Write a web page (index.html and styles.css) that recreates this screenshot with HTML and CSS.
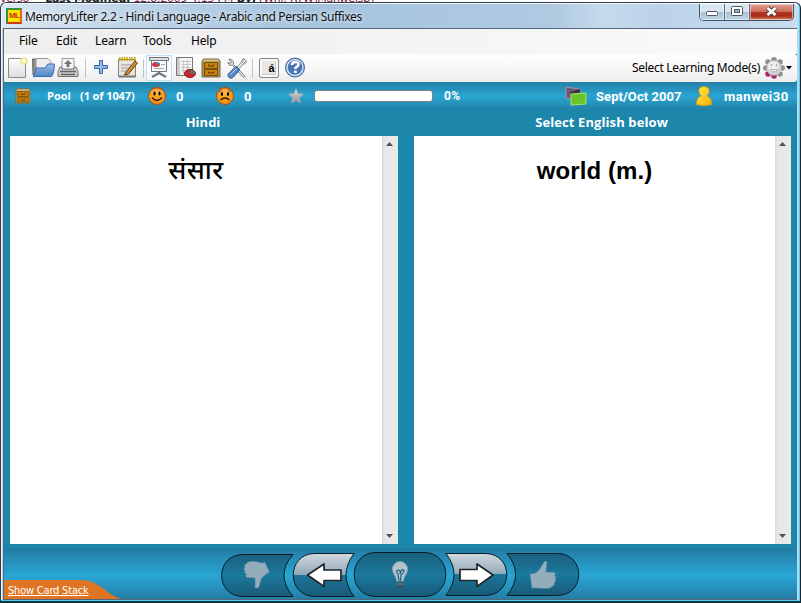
FILE: index.html
```html
<!DOCTYPE html>
<html lang="en">
<head>
<meta charset="utf-8">
<title>MemoryLifter 2.2</title>
<link rel="stylesheet" href="styles.css">
</head>
<body>
<svg width="0" height="0" class="defs" aria-hidden="true">
  <defs>
    <linearGradient id="paper" x2="0" y2="1"><stop stop-color="#fff"/><stop offset="1" stop-color="#ddd"/></linearGradient>
    <linearGradient id="face" x2="0" y2="1"><stop stop-color="#e8750c"/><stop offset=".5" stop-color="#ffa51e"/><stop offset="1" stop-color="#f08a12"/></linearGradient>
    <linearGradient id="dark" x2="0" y2="1"><stop stop-color="#1a5f7e"/><stop offset=".5" stop-color="#1b7a9d"/><stop offset="1" stop-color="#195a78"/></linearGradient>
    <linearGradient id="lit" x2="0" y2="1"><stop stop-color="#d3d8dd"/><stop offset=".49" stop-color="#91a9ba"/><stop offset=".5" stop-color="#1c7599"/><stop offset="1" stop-color="#195a78"/></linearGradient>
    <linearGradient id="blue" x2="0" y2="1"><stop stop-color="#9dbfe8"/><stop offset="1" stop-color="#4f84c6"/></linearGradient>
    <linearGradient id="grey" x2="0" y2="1"><stop stop-color="#d6d6d6"/><stop offset="1" stop-color="#999"/></linearGradient>
    <linearGradient id="gold" x2="1" y2="1"><stop stop-color="#fff04a"/><stop offset="1" stop-color="#ffab08"/></linearGradient>
    <symbol id="drawer" viewBox="0 0 20 20">
      <path d="M2.500 1h15l1.500 2.500V19H1V3.500z" fill="#a98f50" stroke="#7a6942"/>
      <path d="M3 1.500h14l1 2H2z" fill="#d4bb80"/>
      <path d="M3.500 4.500h13v6h-13zM3.500 11.500h13v6h-13z" fill="#cf8004" stroke="#6d5013"/>
      <path d="M7.500 6.500v1.500h5v-1.500M7.500 13.500v1.500h5v-1.500" fill="none" stroke="#4e3812"/>
    </symbol>
  </defs>
</svg>
<div class="behind"><span>verso&nbsp; &nbsp; &nbsp;</span><b>Last Modified:</b><span> 12.8.2009 4:15 PM</span><b> By:</b><span> [Wnl: RTW\Manweisb]</span></div>
<main class="window">
  <header class="titlebar">
    <span class="logo">ML</span>
    <h1>MemoryLifter 2.2 - Hindi Language - Arabic and Persian Suffixes</h1>
    <div class="caption">
      <span class="cap min"><svg width="12" height="5"><rect x=".5" y=".5" width="11" height="4" rx="1" fill="#fff" stroke="#4c5668"/></svg></span>
      <span class="cap max"><svg width="12" height="10"><rect x=".5" y=".5" width="11" height="9" rx="1" fill="#fff" stroke="#4c5668"/><rect x="3.500" y="3.500" width="5" height="3" fill="#9eb5cc" stroke="#4c5668"/></svg></span>
      <span class="cap close"><svg width="13" height="11"><path d="M2.500 2l8 7M10.500 2l-8 7" stroke="#553c42" stroke-width="4.600"/><path d="M2.500 2l8 7M10.500 2l-8 7" stroke="#fff" stroke-width="2.700"/></svg></span>
    </div>
  </header>
  <section class="client">
    <nav class="menu"><span class="m1">File</span><span class="m2">Edit</span><span class="m3">Learn</span><span class="m4">Tools</span><span class="m5">Help</span></nav>
    <div class="toolbar">
      <svg class="ic" viewBox="0 0 24 24"><path d="M3.500 2.500h17v19h-17z" fill="url(#paper)" stroke="#888c8c"/><circle cx="19" cy="5" r="3" fill="#fffde0" stroke="#eee07a" stroke-width="1.500"/></svg>
      <svg class="ic open" viewBox="0 0 24 24"><path d="M2 19L1.500 3h5l1.500 2h11v14z" fill="#929292" stroke="#666"/><path d="M5 2.500h12l3 3V13H5z" fill="#eee" stroke="#999"/><path d="M2 20.500q2-1 3-8.500h9l3-4h6.500q-.5 10-3 12.500z" fill="url(#blue)" stroke="#356baf"/></svg>
      <svg class="ic print" viewBox="0 0 24 24"><path d="M6 13V2.500h12V13" fill="#f7f7f7" stroke="#999"/><path d="M12 4l4 4h-2.500v3h-3V8H8z" fill="#777"/><path d="M4 11h2v2h12v-2h2l2 4v5.500H2V15z" fill="#ccc" stroke="#777"/><path d="M4 15.500h16M5 18.500h14" stroke="#666" stroke-width="1.500"/></svg>
      <i class="sep s1"></i>
      <svg class="ic plus" viewBox="0 0 24 24"><path d="M10.500 4.500h3v5h5v3h-5v5h-3v-5h-5v-3h5z" fill="#91bce7" stroke="#3465a4"/></svg>
      <svg class="ic note" viewBox="0 0 24 24"><path d="M3.500 3.500h17v17h-17z" fill="#e8e6de" stroke="#84827c"/><path d="M4 20.500h16.500" stroke="#777" stroke-width="2"/><path d="M6 9h10M6 12h8M6 15h6" stroke="#999"/><path d="M4 3h17" stroke="#c9a80b" stroke-width="4" stroke-dasharray="1.500 1"/><path d="M11 16L20 5l2.500 2-9 11-4 1z" fill="#ce8f32" stroke="#5b3d18"/></svg>
      <i class="sep s2"></i>
      <span class="selected"><svg class="ic" viewBox="0 0 24 24"><path d="M4.500 4.500h15v11h-15z" fill="#fafafa" stroke="#777"/><path d="M2.500 1.500h19v3h-19z" fill="#ddd" stroke="#777"/><ellipse cx="9" cy="8.500" rx="4" ry="2.500" fill="#d53035"/><path d="M9 8.500V6a4 2.500 0 0 1 4 2.500z" fill="#478dc8"/><path d="M7 12.500h10M14 8.500h4" stroke="#aaa"/><path d="M12 15v3M12 17l-7 4M12 17l7 4" stroke="#777" stroke-width="2.200"/></svg></span>
      <svg class="ic stats" viewBox="0 0 24 24"><path d="M3.500 1.500h16v18h-16z" fill="#f6f6f6" stroke="#777"/><path d="M4 2h3v17H4z" fill="#ccc"/><path d="M8 5.500h10M8 8.500h10M8 11.500h10M8 14.500h10M10.500 4v14M14.500 4v14" stroke="#c4c4c4"/><ellipse cx="17" cy="17.500" rx="5.500" ry="4" fill="#c6262b" stroke="#8e171b"/><path d="M17 17.500v-3.500a5 3 0 0 1 5 3.500z" fill="#467b76"/></svg>
      <svg class="ic box"><use href="#drawer"/></svg>
      <svg class="ic tools" viewBox="0 0 24 24"><path d="M3 3l2-1 3 3v3l11 11c3 3 1 4-1 2L7 9H4L2 6l3 1 1-2z" fill="#eee" stroke="#6a6f72"/><path d="M20 2l2 2-8 9-2-2z" fill="#eee" stroke="#777"/><path d="M19 1l-2 4 3 3 3-3" fill="none" stroke="#888"/><path d="M11 10l4 4-7 8c-3 3-8-1-5-4z" fill="#578bc7" stroke="#23548e"/><path d="M5 19l6-6" stroke="#c1daf6"/></svg>
      <i class="sep s3"></i>
      <span class="key">á</span>
      <svg class="ic help" viewBox="0 0 24 24"><circle cx="12" cy="11.500" r="9.500" fill="#4773b3" stroke="#456998"/><circle cx="12" cy="11.500" r="8" fill="#4976b7" stroke="#d5e2f3" stroke-width="1.500"/><path d="M9 9c0-4 6.500-4 6.500-.5 0 2.200-3.200 2-3.200 4.500" fill="none" stroke="#fff" stroke-width="2.500"/><path d="M11 14.500h2.700V17H11z" fill="#fff"/></svg>
      <span class="mode">Select Learning Mode(s)</span>
      <svg class="gear" viewBox="0 0 22 22"><g fill="#8f9194"><circle cx="11" cy="2.800" r="2.800"/><circle cx="17" cy="5" r="2.800"/><circle cx="19.200" cy="11" r="2.800"/><circle cx="5" cy="5" r="2.800"/></g><g fill="#a8296a"><circle cx="5" cy="17" r="2.800"/><circle cx="11" cy="19" r="2.800"/></g><circle cx="2.800" cy="11" r="2.800" fill="#9b8d96"/><circle cx="17" cy="17" r="2.800" fill="#8f9194"/><circle cx="11" cy="11" r="7.500" fill="#cfcfd1"/><circle cx="10.500" cy="9.500" r="5.500" fill="#eee"/><path d="M8.500 7v2.500M13.500 7v2.500" stroke="#aaa" stroke-width="1.200"/><path d="M7 12.500q4 4.500 8 0z" fill="#fff" stroke="#999" stroke-width=".7"/></svg>
      <svg class="drop" width="6" height="4"><path d="M0 0h6L3 3.500z"/></svg>
    </div>
    <div class="status">
      <svg class="pool-ic"><use href="#drawer"/></svg>
      <span class="pool">Pool</span><span class="count">(1 of 1047)</span>
      <svg class="smile" viewBox="0 0 18 18"><circle cx="9" cy="9" r="8.500" fill="url(#face)" stroke="#a84b0a"/><ellipse cx="9" cy="5" rx="6" ry="3" fill="#ffd37a" opacity=".5"/><ellipse cx="6.500" cy="6.500" rx="1.100" ry="2.100"/><ellipse cx="11.500" cy="6.500" rx="1.100" ry="2.100"/><path d="M4 10.500q5 6 10 0" fill="none" stroke="#26180a" stroke-width="1.300"/></svg>
      <span class="good">0</span>
      <svg class="smile sad" viewBox="0 0 18 18"><circle cx="9" cy="9" r="8.500" fill="url(#face)" stroke="#a84b0a"/><ellipse cx="9" cy="5" rx="6" ry="3" fill="#ffd37a" opacity=".5"/><ellipse cx="6" cy="7" rx="1.100" ry="1.900"/><ellipse cx="12" cy="7" rx="1.100" ry="1.900"/><path d="M4.500 13q4.500-4 9 0" fill="none" stroke="#26180a" stroke-width="1.300"/><path d="M3 5l3-2M12 3l3 2" stroke="#6d3a0a" stroke-width=".8"/></svg>
      <span class="bad">0</span>
      <svg class="star" viewBox="0 0 16 16"><path d="M8 .5l2.300 5 5.200.6-3.800 3.600 1 5.300L8 12.500 3.300 15l1-5.300L.5 6.100l5.200-.6z" fill="url(#grey)" stroke="#9aa5aa" stroke-width=".5"/></svg>
      <span class="progress"></span><span class="percent">0%</span>
      <svg class="stack" viewBox="0 0 22 20"><path d="M1 1l14 2v11L1 12z" fill="#6e5877" stroke="#a991b1"/><path d="M5 6l10-3v6l-7 1v3z" fill="#3d3245"/><path d="M6 8l15-1v11L6 19z" fill="#6ac52b" stroke="#a3e566"/></svg>
      <span class="date">Sept/Oct 2007</span>
      <svg class="user" viewBox="0 0 16 20"><path d="M8 .8c7 0 5.500 7 2.500 9.200C14 11 15.500 14 15.300 18.500Q8 20.500.7 18.500C.5 14 2 11 5.500 10 2.500 7.500 1 .8 8 .8z" fill="url(#gold)" stroke="#f3a800"/></svg>
      <span class="name">manwei30</span>
    </div>
    <div class="cards">
      <section class="card left"><h2>Hindi</h2><div class="sheet"><p class="word hindi">संसार</p><div class="scroll"><svg width="7" height="4"><path d="M0 4h7L3.500 0z" fill="#505050"/></svg><svg width="7" height="4"><path d="M0 0h7L3.500 4z" fill="#505050"/></svg></div></div></section>
      <section class="card right"><h2>Select English below</h2><div class="sheet"><p class="word english">world (m.)</p><div class="scroll"><svg width="7" height="4"><path d="M0 4h7L3.500 0z" fill="#505050"/></svg><svg width="7" height="4"><path d="M0 0h7L3.500 4z" fill="#505050"/></svg></div></div></section>
    </div>
    <footer class="controls">
      <svg width="72" height="46"><path d="M22 2.500h50Q54 23 72 44.500H22C-6.500 44.500-6.500 2.500 22 2.500z" fill="url(#dark)" stroke="#061d29"/><path d="M27 10q5-1.500 10 0l5 1 1.500-1.200 5 10-5 3.700q-3 2-4 5.500-.5 4-2 7h-3.500V26l-8-.5q-2.500-1-.5-3.200-3-1.300-1.500-3.500-2.200-1.500-.2-3.300Q22 13 25 12z" fill="#93adbd" stroke="#527f98" stroke-width=".6"/></svg>
      <svg width="61" height="46"><path d="M22 1.500h39Q45 23 61 44.500H22C-7 44.500-7 1.500 22 1.500z" fill="url(#lit)" stroke="#061d29"/><path d="M14.500 23L31 12v6h17v10.500H31v6z" fill="#fff" stroke="#202528" stroke-width="1.700" stroke-linejoin="round"/></svg>
      <svg width="92" height="46"><path d="M22 .5h48c29 0 29 44 0 44H22C-7 44.500-7 .5 22 .5z" fill="url(#dark)" stroke="#061d29"/><path d="M42.500 29c0-5-4-7-4-12a7.500 7.500 0 0 1 15 0c0 5-4 7-4 12z" fill="#b2c4ce" stroke="#86a3b4"/><path d="M45 29l-1-7q-3-4 0-4t2 4q2-7 4-3 0 2-3 4l-.5 6" fill="none" stroke="#245e79" stroke-width="1.200"/><path d="M43 30h7v4l-2 3h-3l-2-3z" fill="#355769"/><path d="M43 32h7" stroke="#6f8b9b"/></svg>
      <svg width="61" height="46"><path d="M0 1.500h39c29 0 29 42 0 42H0Q16 22.500 0 1.500z" fill="url(#lit)" stroke="#061d29"/><path d="M47 23L31 12v5.500H14v11h17v6z" fill="#fff" stroke="#202528" stroke-width="1.700" stroke-linejoin="round"/></svg>
      <svg width="72" height="46"><path d="M0 1.500h50c29 0 29 42 0 42H0Q17 22.500 0 1.500z" fill="url(#dark)" stroke="#061d29"/><path d="M23 22q6 0 9-4l5-8q2-2 3 .5L39 20l8 .3q2.500 1.200.5 3.200 2.800 1.500.6 3.500 1.800 1.700-.6 3.500 1 2.500-2 3.500-2 3-6 2.500L27 36l-2 .5z" fill="#93adbd" stroke="#527f98" stroke-width=".6"/></svg>
      <a class="stack-tab"><svg width="122" height="20"><path d="M0 0h76C98 0 102 17 122 20H0z" fill="#df7524"/></svg><span>Show Card Stack</span></a>
    </footer>
  </section>
</main>
</body>
</html>
```
FILE: styles.css
```css
* { box-sizing: border-box; }
body { margin: 0; width: 801px; height: 603px; overflow: hidden; background: #fff; font-family: "Noto Sans", sans-serif; }
.defs { position: absolute; }
svg { display: block; flex: none; overflow: visible; }
h1, h2, p { margin: 0; }
.behind { height: 2px; display: flex; align-items: flex-end; font: 11px/6px "DejaVu Sans", sans-serif; letter-spacing: -.25px; color: #842448; white-space: pre; }
.behind b { color: #222; }
.window { width: 801px; height: 601px; position: relative; border: 1px solid #303b49; border-right-color: #172631; border-bottom: 2px solid #17303c; border-radius: 6px 6px 0 0; padding: 0 2px 1px 1px; background: #bed6ec; box-shadow: inset -1px -1px #48d1f3, inset 1px 1px #eef7ff; }
.titlebar { height: 25px; display: flex; padding: 0 4px; background: linear-gradient(90deg, #dce7f1 0, #bed3e7 130px, #a6c4df 310px, #afc9e1 550px, #c6daec 600px, #bbd3ea 655px, #c9dcef 100%); border-top: 1px solid #f3f9ff; border-radius: 5px 5px 0 0; }
.logo { width: 16px; height: 16px; margin-top: 4px; background: #ffe000; border: 2px solid #35913a; border-right-color: #d66b21; border-bottom-color: #ce3a18; font: bold 8px/11px "Liberation Sans", sans-serif; text-align: center; color: #c53812; letter-spacing: -.7px; }
h1 { width: 350px; margin: 3px 0 0 3px; font-size: 12px; line-height: 19px; font-weight: 400; color: #111; letter-spacing: -.34px; white-space: nowrap; text-shadow: 0 0 4px #fff; }
.caption { display: flex; margin-left: auto; width: 95px; height: 17px; margin-right: 0; border: 1px solid #3e526d; border-top: 0; border-radius: 0 0 5px 5px; overflow: hidden; }
.cap { width: 25px; display: flex; align-items: center; justify-content: center; background: linear-gradient(#d8e4ee 48%, #a9bfd2 50%, #c0d7e7); border-right: 1px solid #526880; box-shadow: inset 0 0 0 1px #ffffff80; }
.min { padding-top: 3px; }
.max { padding-bottom: 2px; }
.close { width: 43px; border: 0; padding-bottom: 1px; background: linear-gradient(#dfa395, #cd6b5a 47%, #b43521 50%, #a82a18 75%, #d58a65); }
.client { height: 572px; margin: 0 1px; border: 1px solid #536579; border-right-width: 0; background: #1c86ab; overflow: hidden; }
.menu { height: 25px; display: flex; background: linear-gradient(90deg, #eee, #fafafa); font-size: 12px; line-height: 24px; padding-left: 15px; }
.menu span { letter-spacing: -.15px; }
.m1 { width: 37px; } .m2 { width: 39px; } .m3 { width: 48px; } .m4 { width: 48px; }
.toolbar { height: 28px; display: flex; align-items: center; background: linear-gradient(#fdfdfd, #f8f8f8 50%, #ededed); padding-left: 1px; border-radius: 0 3px 3px 0; }
.ic { width: 24px; height: 24px; flex: none; }
.open { margin-left: 2px; }
.print { margin-left: 1px; }
.sep { width: 1px; height: 19px; background: #c3c3c3; flex: none; }
.s1 { margin-left: 5px; }
.plus { margin-left: 3px; }
.note { margin-left: 2px; }
.s2 { margin-left: 4px; }
.selected { width: 26px; height: 26px; border: 1px solid #b9e2f7; background: #f5fbff; margin-left: 2px; flex: none; }
.stats { margin-left: 1px; }
.box { width: 20px; height: 20px; margin-left: 4px; }
.tools { margin-left: 5px; width: 22px; height: 22px; }
.s3 { margin-left: 4px; }
.key { width: 20px; height: 20px; margin-left: 6px; border: 1px solid #858585; border-radius: 2px; background: #e8e8e2; box-shadow: inset 0 0 0 2px #f8f8f8, inset -3px -3px #ccc; font: bold 11px/18px "Liberation Sans", sans-serif; text-align: center; padding-left: 5px; flex: none; }
.help { margin-left: 4px; }
.mode { width: 128px; margin: -2px 0 0 auto; font-size: 12px; letter-spacing: -.3px; white-space: nowrap; }
.gear { width: 22px; height: 22px; margin-left: 3px; }
.drop { margin: 0 5px 0 1px; }
.status { height: 28px; display: flex; align-items: center; background: linear-gradient(#2281a7, #29a5d2 50%, #2281a7); color: #fff; font: bold 12px/28px Roboto, sans-serif; padding-left: 11px; white-space: nowrap; }
.pool-ic { width: 16px; height: 16px; }
.pool { width: 33px; margin-left: 16px; font: bold 11px/28px "Open Sans", sans-serif; }
.count { width: 68px; font: bold 11px/28px "Open Sans", sans-serif; letter-spacing: -.1px; }
.smile { width: 18px; height: 18px; }
.good { width: 22px; margin-left: 10px; font-size: 13px; line-height: 29px; }
.sad { margin-left: 18px; }
.bad { width: 44px; margin-left: 10px; font-size: 13px; line-height: 29px; }
.star { width: 16px; height: 16px; }
.progress { width: 119px; height: 12px; margin-left: 10px; background: #fff; border: 1px solid #817d80; border-radius: 3px; }
.percent { margin-left: 11px; font-size: 12px; letter-spacing: .3px; }
.stack { width: 22px; height: 20px; margin-left: auto; }
.date { width: 86px; margin-left: 9px; font-size: 13px; letter-spacing: .06px; line-height: 29px; }
.user { width: 16px; height: 20px; margin-left: 14px; }
.name { width: 65px; margin: 0 8px 0 12px; font-size: 13px; letter-spacing: .55px; line-height: 29px; }
.cards { height: 434px; display: flex; gap: 16px; padding: 0 6px; }
.left { width: 388px; } .right { width: 377px; }
.card { flex: none; }
.card h2 { height: 26px; font: bold 13px/25px "Open Sans", sans-serif; text-align: center; color: #fff; padding-right: 2px; }
.right h2 { letter-spacing: .1px; }
.sheet { height: 408px; background: #fff; display: flex; }
.word { flex: 1; text-align: center; color: #000; }
.hindi { font: 500 26px/75px "Noto Sans Devanagari", "Noto Sans", "Lohit Devanagari", sans-serif; letter-spacing: .5px; }
.english { font: bold 24px/70px "Liberation Sans", sans-serif; letter-spacing: .1px; }
.scroll { width: 16px; padding: 6px 2px 6px 0; display: flex; flex-direction: column; justify-content: space-between; align-items: center; background: linear-gradient(90deg, #d7d7d7, #e8e8e8 3px, #e9e9e9); }
.controls { height: 52px; margin-top: 4px; padding: 4px 0 0 217px; display: flex; position: relative; background: linear-gradient(#237ba3, #29a6d5 53%, #247ca3); }
.stack-tab { position: absolute; left: 0; bottom: 0; color: #fff; font: 11px/15px "DejaVu Sans Condensed", "DejaVu Sans", sans-serif; }
.stack-tab span { position: absolute; left: 4px; top: 3px; text-decoration: underline; white-space: nowrap; letter-spacing: -.2px; }
```
